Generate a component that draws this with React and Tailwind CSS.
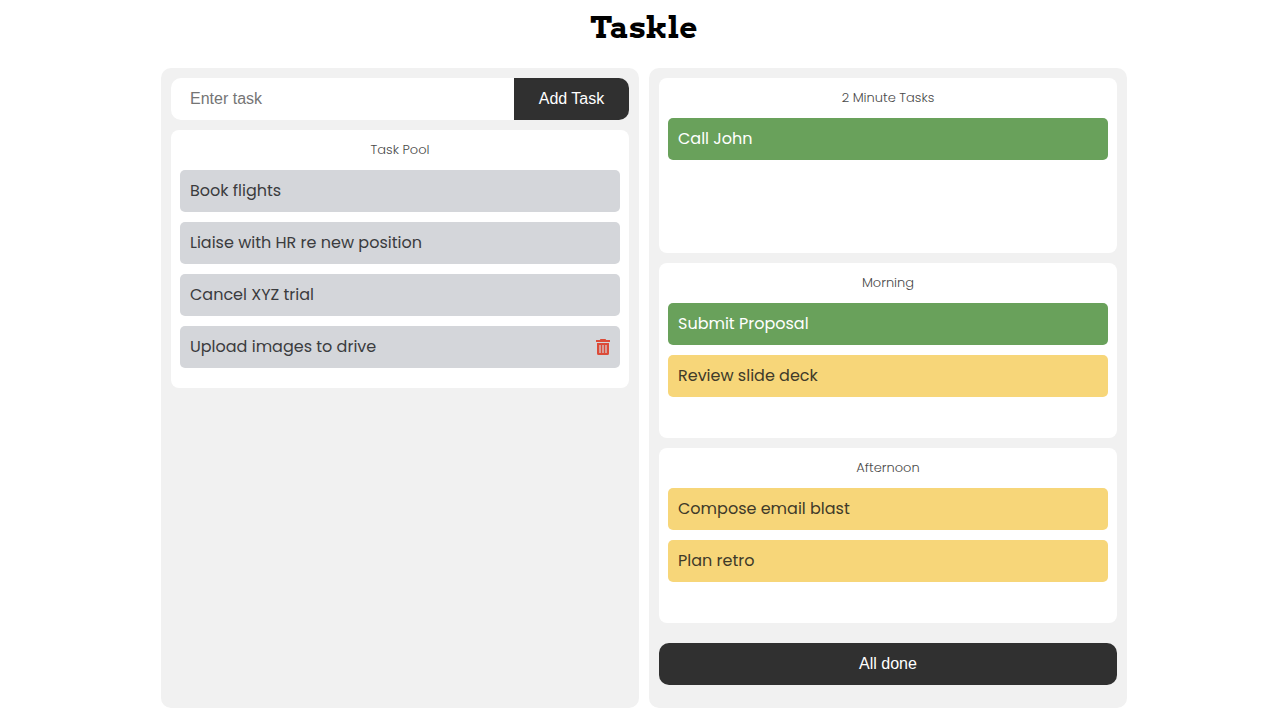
import { useState } from "react";

const tones = {
  idle: "bg-[#d4d6da] text-[#3b3c3e]",
  done: "bg-[#69a15b] text-white",
  active: "bg-[#f7d679] text-[#403a29]",
};

const pool = [
  { name: "Book flights" },
  { name: "Liaise with HR re new position" },
  { name: "Cancel XYZ trial" },
  { name: "Upload images to drive", removable: true },
];

const sections = [
  { title: "2 Minute Tasks", tasks: [{ name: "Call John", tone: "done" }] },
  {
    title: "Morning",
    tasks: [
      { name: "Submit Proposal", tone: "done" },
      { name: "Review slide deck", tone: "active" },
    ],
  },
  {
    title: "Afternoon",
    tasks: [
      { name: "Compose email blast", tone: "active" },
      { name: "Plan retro", tone: "active" },
    ],
  },
];

function TrashIcon() {
  return (
    <svg viewBox="0 0 14 16" className="h-4 w-3.5" aria-hidden="true">
      <path
        fill="#dc4b38"
        fillRule="evenodd"
        d="M4.5 0h5l.7 1H14v2H0V1h3.8zM1 4h12v10.5a1.5 1.5 0 0 1-1.5 1.5h-9A1.5 1.5 0 0 1 1 14.5zm2.400 2v8h1.200V6zm3 0v8h1.200V6zm3 0v8h1.200V6z"
      />
    </svg>
  );
}

function Task({ name, tone = "idle", removable }) {
  return (
    <li className={`flex h-[42px] items-center justify-between rounded-[5px] px-[10px] text-base ${tones[tone]}`}>
      <span>{name}</span>
      {removable && (
        <button type="button" aria-label={`Delete ${name}`}>
          <TrashIcon />
        </button>
      )}
    </li>
  );
}

function Card({ title, tasks, className = "" }) {
  return (
    <section className={`rounded-lg bg-white px-[9px] pb-5 ${className}`}>
      <h2 className="flex h-10 items-center justify-center pb-px text-[13px] font-light text-[#4a4a4a]">
        {title}
      </h2>
      <ul className="flex flex-col gap-[10px]">
        {tasks.map((task) => (
          <Task key={task.name} {...task} />
        ))}
      </ul>
    </section>
  );
}

export default function App() {
  const [draft, setDraft] = useState("");

  return (
    <div className="pb-3 pl-2 font-['Poppins','Inter',sans-serif]">
      <h1 className="flex h-[68px] items-start justify-center pt-1 font-['Arvo','DejaVu_Serif',serif] text-[31px] leading-[46px] font-bold text-black">
        Taskle
      </h1>
      <main className="mx-auto grid max-w-[966px] grid-cols-2 gap-[10px]">
        <div className="flex flex-col gap-[10px] rounded-[10px] bg-[#f1f1f1] p-[10px]">
          <form
            className="flex h-[42px] overflow-hidden rounded-[10px] bg-white font-['Liberation_Sans',sans-serif] text-base"
            onSubmit={(event) => event.preventDefault()}
          >
            <input
              type="text"
              aria-label="Enter task"
              placeholder="Enter task"
              value={draft}
              onChange={(event) => setDraft(event.target.value)}
              className="min-w-0 flex-1 px-[19px] text-[#303030] outline-none placeholder:text-[#757575]"
            />
            <button type="submit" className="w-[115px] bg-[#303030] text-white">
              Add Task
            </button>
          </form>
          <Card title="Task Pool" tasks={pool} />
        </div>
        <div className="flex flex-col gap-[10px] rounded-[10px] bg-[#f1f1f1] px-[10px] pt-[10px] pb-[23px]">
          {sections.map((section) => (
            <Card key={section.title} {...section} className="min-h-[175px]" />
          ))}
          <button
            type="button"
            className="mt-[10px] h-[42px] rounded-[10px] bg-[#303030] font-['Liberation_Sans',sans-serif] text-base text-white"
          >
            All done
          </button>
        </div>
      </main>
    </div>
  );
}
